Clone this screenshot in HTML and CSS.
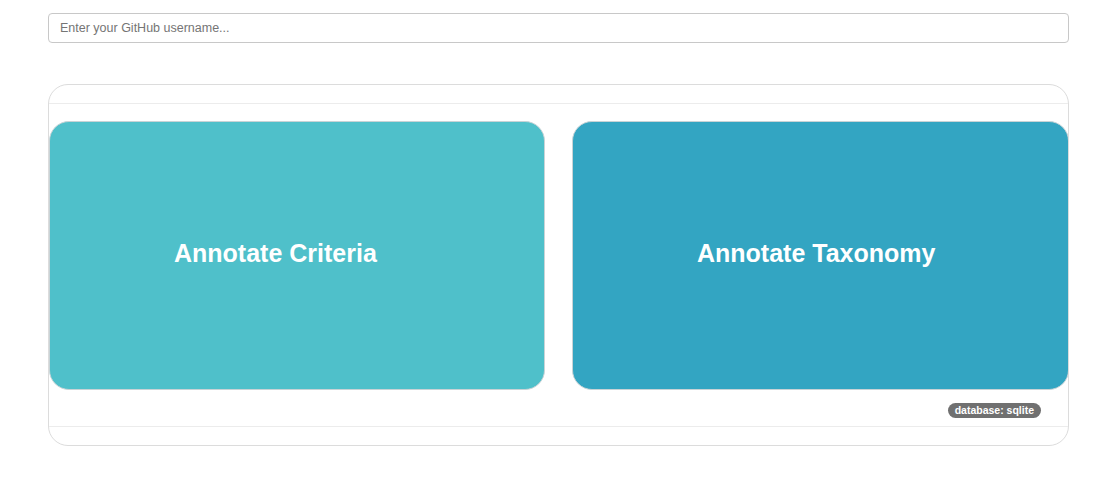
FILE: index.html
```html
<!DOCTYPE html>
<html>
<head>
<meta charset="utf-8">
<link rel="stylesheet" href="styles.css">
</head>
<body>
<div class="page">
  <input class="username" type="text" placeholder="Enter your GitHub username...">
  <div class="panel">
    <div class="panel-header"></div>
    <div class="panel-body">
      <div class="choices">
        <a class="choice criteria" href="#">Annotate Criteria</a>
        <a class="choice taxonomy" href="#">Annotate Taxonomy</a>
      </div>
      <div class="meta">
        <span class="badge">database: sqlite</span>
      </div>
    </div>
    <div class="panel-footer"></div>
  </div>
</div>
</body>
</html>
```

FILE: styles.css
```css
html, body {
  margin: 0;
  padding: 0;
  background: #fff;
  font-family: "Liberation Sans", Arial, sans-serif;
}
.page {
  padding: 13px 44px 0 48px;
}
.username {
  display: block;
  box-sizing: border-box;
  width: 100%;
  height: 30px;
  padding: 0 11px;
  border: 1px solid #c8c8c8;
  border-radius: 4px;
  font-family: "Liberation Sans", Arial, sans-serif;
  font-size: 12.5px;
  color: #333;
  outline: none;
}
.username::placeholder {
  color: #757575;
}
.panel {
  margin-top: 41px;
  border: 1px solid #dcdcdc;
  border-radius: 20px;
  overflow: hidden;
}
.panel-header {
  height: 18px;
  border-bottom: 1px solid #ececec;
}
.panel-body {
  padding: 17px 0 0;
}
.choices {
  display: grid;
  grid-template-columns: 496px 497px;
  column-gap: 27px;
}
.choice {
  display: flex;
  align-items: center;
  justify-content: flex-start;
  height: 269px;
  box-sizing: border-box;
  border: 1px solid #c9d3d6;
  border-radius: 20px;
  color: #fff;
  font-weight: bold;
  font-size: 25px;
  text-decoration: none;
  padding: 0 0 5px 124px;
}
.criteria {
  background: #4fc0ca;
}
.taxonomy {
  background: #33a5c2;
}
.meta {
  display: flex;
  justify-content: flex-end;
  padding: 13px 27px 8px 0;
}
.badge {
  background: #707070;
  color: #fff;
  font-size: 10.5px;
  font-weight: bold;
  line-height: 15px;
  padding: 0 7px;
  border-radius: 8px;
}
.panel-footer {
  height: 18px;
  border-top: 1px solid #ececec;
}
```
